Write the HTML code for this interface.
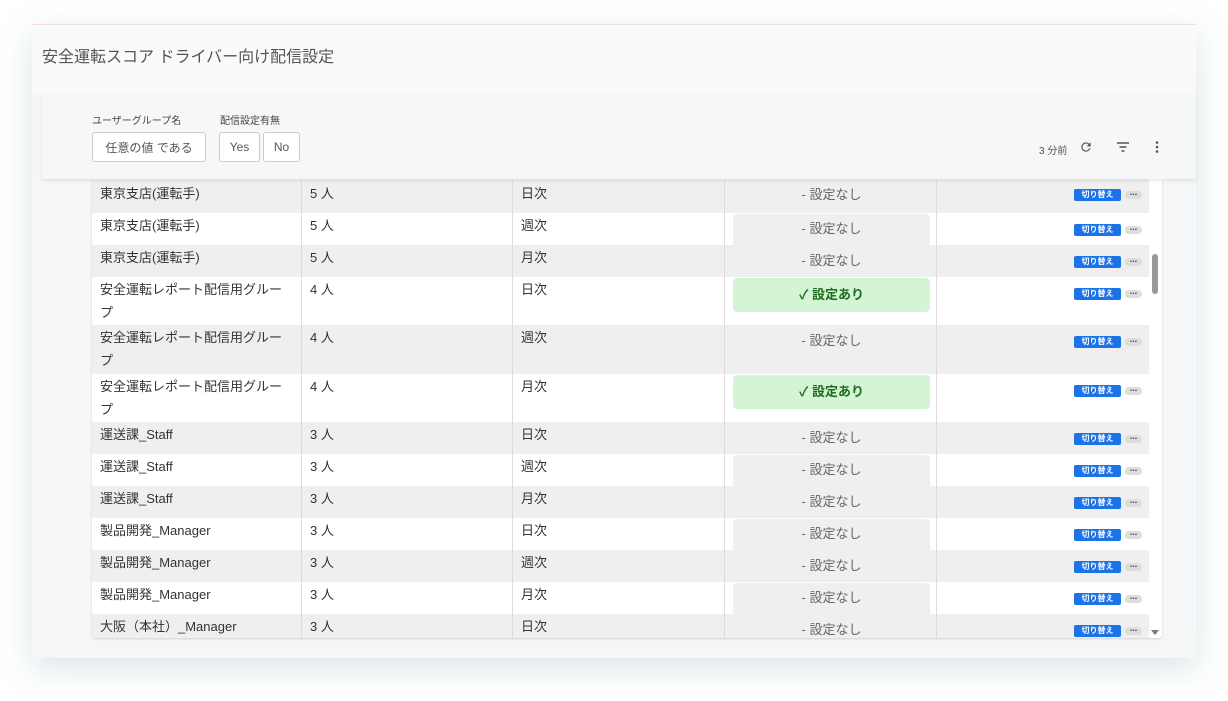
<!DOCTYPE html>
<html><head><meta charset="utf-8"><style>
*{margin:0;padding:0;box-sizing:border-box}
body{width:1228px;height:701px;background:#fff;font-family:"Liberation Sans","Noto Sans CJK JP",sans-serif;position:relative;overflow:hidden;color:#333}
.card{position:absolute;left:32px;top:24px;width:1164px;height:634px;background:#f4f6f7;box-shadow:0 10px 30px rgba(150,180,185,.35);border-top:1px solid #f3dede}
.hdr{position:absolute;left:0;top:0;width:1164px;height:68px;background:#fafafa}
.title{position:absolute;left:10px;top:18px;font-size:16px;color:#555}
.fb{position:absolute;left:10px;top:68px;width:1154px;height:86px;background:#f6f7f8;box-shadow:0 2px 3px rgba(0,0,0,.08);z-index:5}
.lbl{position:absolute;font-size:10px;color:#444;top:19px}
.btn{position:absolute;top:39px;height:30px;border:1px solid #ccc;border-radius:3px;background:#fff;font-size:12px;color:#555;display:flex;align-items:center;justify-content:center}
.tbl{position:absolute;left:92px;top:178px;width:1070px;height:460px;background:#fff;overflow:hidden;border-radius:0 0 4px 4px;box-shadow:0 1px 2px rgba(0,0,0,.15)}
.row{position:absolute;left:0;width:1057px;font-size:13px;color:#333}
.row.g{background:#efefef}
.c{position:absolute;top:0;height:100%;border-right:1px solid #dcdcdc;padding:1px 8px;line-height:23px}
.pill{position:absolute;left:641px;width:197px;height:34px;border-radius:4px;text-align:center;line-height:30px;color:#666}
.tog{position:absolute;left:982px;width:47px;height:12px;background:#1a73e8;border-radius:2px;color:#fff;font-size:8px;font-weight:bold;text-align:center;line-height:12px}
.dots{position:absolute;left:1033px;width:17px;height:8px;background:#ddd;border-radius:4px;font-size:9px;line-height:3px;text-align:center;color:#444;font-weight:bold}
.sb{position:absolute;left:1060px;top:76px;width:6px;height:40px;background:#999;border-radius:3px}
</style></head><body>
<div class="card">
<div class="hdr"><div class="title">安全運転スコア ドライバー向け配信設定</div></div>
<div class="fb">
<div class="lbl" style="left:50px">ユーザーグループ名</div>
<div class="lbl" style="left:178px">配信設定有無</div>
<div class="btn" style="left:50px;width:114px;font-size:12px">任意の値 である</div>
<div class="btn" style="left:177px;width:41px">Yes</div>
<div class="btn" style="left:221px;width:37px">No</div>
<div style="position:absolute;left:997px;top:49px;font-size:10px;color:#555">3 分前</div>
<svg style="position:absolute;left:1037px;top:47px" width="14" height="14" viewBox="0 0 24 24"><path d="M17.65 6.35A7.95 7.95 0 0 0 12 4a8 8 0 1 0 7.73 10h-2.08A6 6 0 1 1 12 6c1.66 0 3.14.69 4.22 1.78L13 11h7V4z" fill="#555"/></svg>
<svg style="position:absolute;left:1074px;top:48px" width="14" height="12" viewBox="0 0 14 12"><path d="M1 2h12M3.5 6h7M5.5 10h3" stroke="#555" stroke-width="1.5"/></svg>
<svg style="position:absolute;left:1112px;top:47px" width="6" height="14"><circle cx="3" cy="2.5" r="1.3" fill="#555"/><circle cx="3" cy="7" r="1.3" fill="#555"/><circle cx="3" cy="11.5" r="1.3" fill="#555"/></svg>
</div>
</div>
<div class="tbl" id="t"></div>
<script>
var rows=[["東京支店(運転手)","5 人","日次",0,-16,35],["東京支店(運転手)","5 人","週次",0],["東京支店(運転手)","5 人","月次",0],["安全運転レポート配信用グループ","4 人","日次",1,0,48],["安全運転レポート配信用グループ","4 人","週次",0,0,49],["安全運転レポート配信用グループ","4 人","月次",1,0,48],["運送課_Staff","3 人","日次",0],["運送課_Staff","3 人","週次",0],["運送課_Staff","3 人","月次",0],["製品開発_Manager","3 人","日次",0],["製品開発_Manager","3 人","週次",0],["製品開発_Manager","3 人","月次",0],["大阪（本社）_Manager","3 人","日次",0]];
var y=0,h="";
rows.forEach(function(r,i){
 var top=i==0?-13:y, ht=i==0?48:(r[5]||32);
 var g=i%2==0;
 var pad=i==0?17:1;
 h+='<div class="row'+(g?' g':'')+'" style="top:'+top+'px;height:'+ht+'px">';
 h+='<div class="c" style="left:0;width:210px;padding-top:'+pad+'px">'+r[0]+'</div>';
 h+='<div class="c" style="left:210px;width:211px;padding-top:'+pad+'px">'+r[1]+'</div>';
 h+='<div class="c" style="left:421px;width:212px;padding-top:'+pad+'px">'+r[2]+'</div>';
 h+='<div class="c" style="left:633px;width:212px"></div>';
 var pt=i==0?15:1;
 if(r[3]) h+='<div class="pill" style="top:'+pt+'px;background:#d4f5d4;color:#1f6b1f;font-weight:bold;line-height:34px">✓ 設定あり</div>';
 else h+='<div class="pill" style="top:'+pt+'px;'+(g?'':'background:#efefef')+'">- 設定なし</div>';
 h+='<div class="tog" style="top:'+(i==0?24:11)+'px">切り替え</div><div class="dots" style="top:'+(i==0?26:13)+'px">...</div>';
 h+='</div>';
 y=top+ht;
});
h+='<div class="sb"></div><div style="position:absolute;left:1059px;top:452px;border:4px solid transparent;border-top:5px solid #777;width:0;height:0"></div>';
document.getElementById('t').innerHTML=h;
</script>
</body></html>
